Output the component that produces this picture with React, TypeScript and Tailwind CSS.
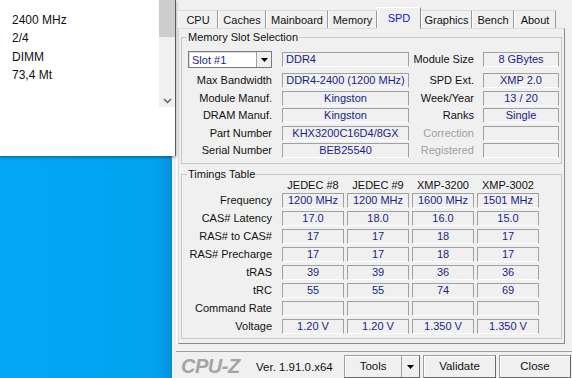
import React from 'react';

const slotRows = [
  { label: 'Max Bandwidth', value: 'DDR4-2400 (1200 MHz)', rLabel: 'SPD Ext.', rValue: 'XMP 2.0' },
  { label: 'Module Manuf.', value: 'Kingston', rLabel: 'Week/Year', rValue: '13 / 20' },
  { label: 'DRAM Manuf.', value: 'Kingston', rLabel: 'Ranks', rValue: 'Single' },
  { label: 'Part Number', value: 'KHX3200C16D4/8GX', rLabel: 'Correction', rValue: '', disabled: true },
  { label: 'Serial Number', value: 'BEB25540', rLabel: 'Registered', rValue: '', disabled: true },
];

const timingHeaders = ['JEDEC #8', 'JEDEC #9', 'XMP-3200', 'XMP-3002'];

const timingRows: { label: string; values: string[] }[] = [
  { label: 'Frequency', values: ['1200 MHz', '1200 MHz', '1600 MHz', '1501 MHz'] },
  { label: 'CAS# Latency', values: ['17.0', '18.0', '16.0', '15.0'] },
  { label: 'RAS# to CAS#', values: ['17', '17', '18', '17'] },
  { label: 'RAS# Precharge', values: ['17', '17', '18', '17'] },
  { label: 'tRAS', values: ['39', '39', '36', '36'] },
  { label: 'tRC', values: ['55', '55', '74', '69'] },
  { label: 'Command Rate', values: ['', '', '', ''] },
  { label: 'Voltage', values: ['1.20 V', '1.20 V', '1.350 V', '1.350 V'] },
];

const tabs = ['CPU', 'Caches', 'Mainboard', 'Memory', 'SPD', 'Graphics', 'Bench', 'About'];
const tabWidths: Record<string, string> = {
  CPU: 'w-[40px]',
  Caches: 'w-[48px]',
  Mainboard: 'w-[62px]',
  Memory: 'w-[49px]',
  SPD: 'w-[44px]',
  Graphics: 'w-[51px]',
  Bench: 'w-[42px]',
  About: 'w-[42px]',
};

const fieldCls =
  'h-[15px] border border-t-[#a0a0a0] border-l-[#a0a0a0] border-r-[#a0a0a0] border-b-white text-[11px] leading-[13px] text-[#1c1c8e] text-center whitespace-nowrap';

const Popup = () => (
  <div className="relative z-10 flex h-[156px] w-[176px] bg-white border-r border-[#5a5a5a] shadow-[0_1px_3px_rgba(0,0,0,0.45)]">
    <div className="flex-1 pl-[12px] pt-[11px] text-[12px] leading-[18.3px] text-[#111]">
      <div>2400 MHz</div>
      <div>2/4</div>
      <div>DIMM</div>
      <div>73,4 Mt</div>
    </div>
    <div className="flex h-[107px] w-[16px] flex-col bg-[#f0f0f0]">
      <div className="h-[37px] bg-[#cdcdcd]" />
      <div className="flex flex-1 items-end justify-center pb-[3px]">
        <svg width="9" height="6" viewBox="0 0 9 6">
          <path d="M1 1 L4.5 4.5 L8 1" fill="none" stroke="#606060" strokeWidth="1.5" />
        </svg>
      </div>
    </div>
  </div>
);

const SlotSelect = () => (
  <div className="flex h-[17px] w-[84px] border border-[#7a7a7a] bg-white">
    <div className="flex-1 pl-[2px] text-[11px] leading-[15px] text-[#1c1c8e] border-t border-l border-[#e0e0e0]">Slot #1</div>
    <div className="flex w-[15px] items-center justify-center border-l border-[#a0a0a0] bg-[#f0f0f0]">
      <svg width="7" height="4" viewBox="0 0 7 4">
        <path d="M0 0 H7 L3.5 4 Z" fill="#000" />
      </svg>
    </div>
  </div>
);

const Button = ({ children, className = '' }: { children: React.ReactNode; className?: string }) => (
  <div
    className={`flex h-[23px] items-center justify-center border border-[#a0a0a0] border-r-[#696969] border-b-[#696969] bg-[#f0f0f0] shadow-[inset_1px_1px_0_#ffffff] text-[11.5px] text-[#111] ${className}`}
  >
    {children}
  </div>
);

export default function App() {
  return (
    <div className="flex h-[378px] w-[572px] overflow-hidden font-['Liberation_Sans',Arial,sans-serif]">
      {/* desktop side */}
      <div className="flex w-[172px] flex-col">
        <Popup />
        <div className="flex-1 bg-[linear-gradient(to_right,#03a7f3_0%,#01a3ef_90%,#0b8fd6_100%)]" />
      </div>

      {/* CPU-Z window */}
      <div className="flex flex-1 flex-col bg-[#f0f0f0] pl-[4px]">
        <div className="flex flex-col border-l border-white pl-[1px]">
          {/* tabs */}
          <div className="mt-[8px] flex h-[20px] items-end">
            {tabs.map((t) =>
              t === 'SPD' ? (
                <div
                  key={t}
                  className={`relative z-10 -mb-px flex h-[22px] items-center justify-center border-t border-l border-r border-t-white border-l-white border-r-[#8a8a8a] bg-[#f0f0f0] pb-[1px] text-[11px] text-[#1515e0] ${tabWidths[t]}`}
                >
                  {t}
                </div>
              ) : (
                <div
                  key={t}
                  className={`flex h-[18px] items-center justify-center border-t border-l border-r border-t-[#dadada] border-l-white border-r-[#9a9a9a] bg-[#f0f0f0] pt-[2px] text-[11px] text-[#111] ${tabWidths[t]}`}
                >
                  {t}
                </div>
              )
            )}
          </div>

          {/* tab panel */}
          <div className="flex h-[316px] w-[387px] flex-col border border-t-[#dcdcdc] border-l-[#dcdcdc] border-r-[#8a8a8a] border-b-[#8a8a8a] px-[2px] pt-[1px]">
            <fieldset className="border border-[#c8c8c8] pb-[5px]">
              <legend className="ml-[5px] px-[1px] text-[11px] leading-[14px] text-[#111]">Memory Slot Selection</legend>
              <div className="pt-[7px]">
                <div className="flex h-[17px] items-center">
                  <div className="w-[90px] pl-[6px]">
                    <SlotSelect />
                  </div>
                  <div className={`ml-[10px] w-[127px] !text-left pl-[3px] ${fieldCls}`}>DDR4</div>
                  <div className="w-[65px] text-right text-[11px] text-[#111]">Module Size</div>
                  <div className={`ml-[9px] w-[76px] ${fieldCls}`}>8 GBytes</div>
                </div>
                <div className="mt-[5px] flex flex-col gap-[2.5px]">
                  {slotRows.map((r) => (
                    <div key={r.label} className="flex h-[15px] items-center">
                      <div className="w-[90px] text-right text-[11px] text-[#111]">{r.label}</div>
                      <div className={`ml-[10px] w-[127px] ${fieldCls}`}>{r.value}</div>
                      <div className={`w-[65px] text-right text-[11px] ${r.disabled ? 'text-[#a0a0a0]' : 'text-[#111]'}`}>{r.rLabel}</div>
                      <div className={`ml-[9px] w-[76px] ${fieldCls}`}>{r.rValue}</div>
                    </div>
                  ))}
                </div>
              </div>
            </fieldset>

            <fieldset className="mt-[3px] border border-[#c8c8c8] pb-[4px]">
              <legend className="ml-[5px] px-[1px] text-[11px] leading-[14px] text-[#111]">Timings Table</legend>
              <div className="-mt-[3px] flex h-[14px] items-center">
                <div className="w-[90px]" />
                <div className="ml-[10px] flex gap-[3px]">
                  {timingHeaders.map((h) => (
                    <div key={h} className="w-[62px] text-center text-[11px] text-[#111]">
                      {h}
                    </div>
                  ))}
                </div>
              </div>
              <div className="mt-[1px] flex flex-col gap-[3px]">
                {timingRows.map((r) => (
                  <div key={r.label} className="flex h-[15px] items-center">
                    <div className="w-[90px] text-right text-[11px] text-[#111]">{r.label}</div>
                    <div className="ml-[10px] flex gap-[3px]">
                      {r.values.map((v, i) => (
                        <div key={i} className={`w-[62px] ${fieldCls}`}>
                          {v}
                        </div>
                      ))}
                    </div>
                  </div>
                ))}
              </div>
            </fieldset>
          </div>
        </div>

        {/* bottom bar */}
        <div className="mt-[7px] flex border-t border-[#a0a0a0] pt-[3px]">
          <div className="flex w-[80px] items-center pl-[5px] text-[20px] font-bold italic leading-[23px] tracking-[-0.5px] text-[#a4a4a4]">
            CPU-Z
          </div>
          <div className="flex w-[88px] items-center pt-[3px] text-[11.5px] text-[#111]">Ver. 1.91.0.x64</div>
          <Button className="w-[76px] !justify-start">
            <span className="w-[57px] text-center">Tools</span>
            <span className="flex h-full w-[18px] items-center justify-center border-l border-[#a0a0a0]">
              <svg width="7" height="4" viewBox="0 0 7 4">
                <path d="M0 0 H7 L3.5 4 Z" fill="#000" />
              </svg>
            </span>
          </Button>
          <Button className="ml-[3px] w-[73px]">Validate</Button>
          <Button className="ml-[3px] w-[72px]">Close</Button>
        </div>
      </div>
    </div>
  );
}
